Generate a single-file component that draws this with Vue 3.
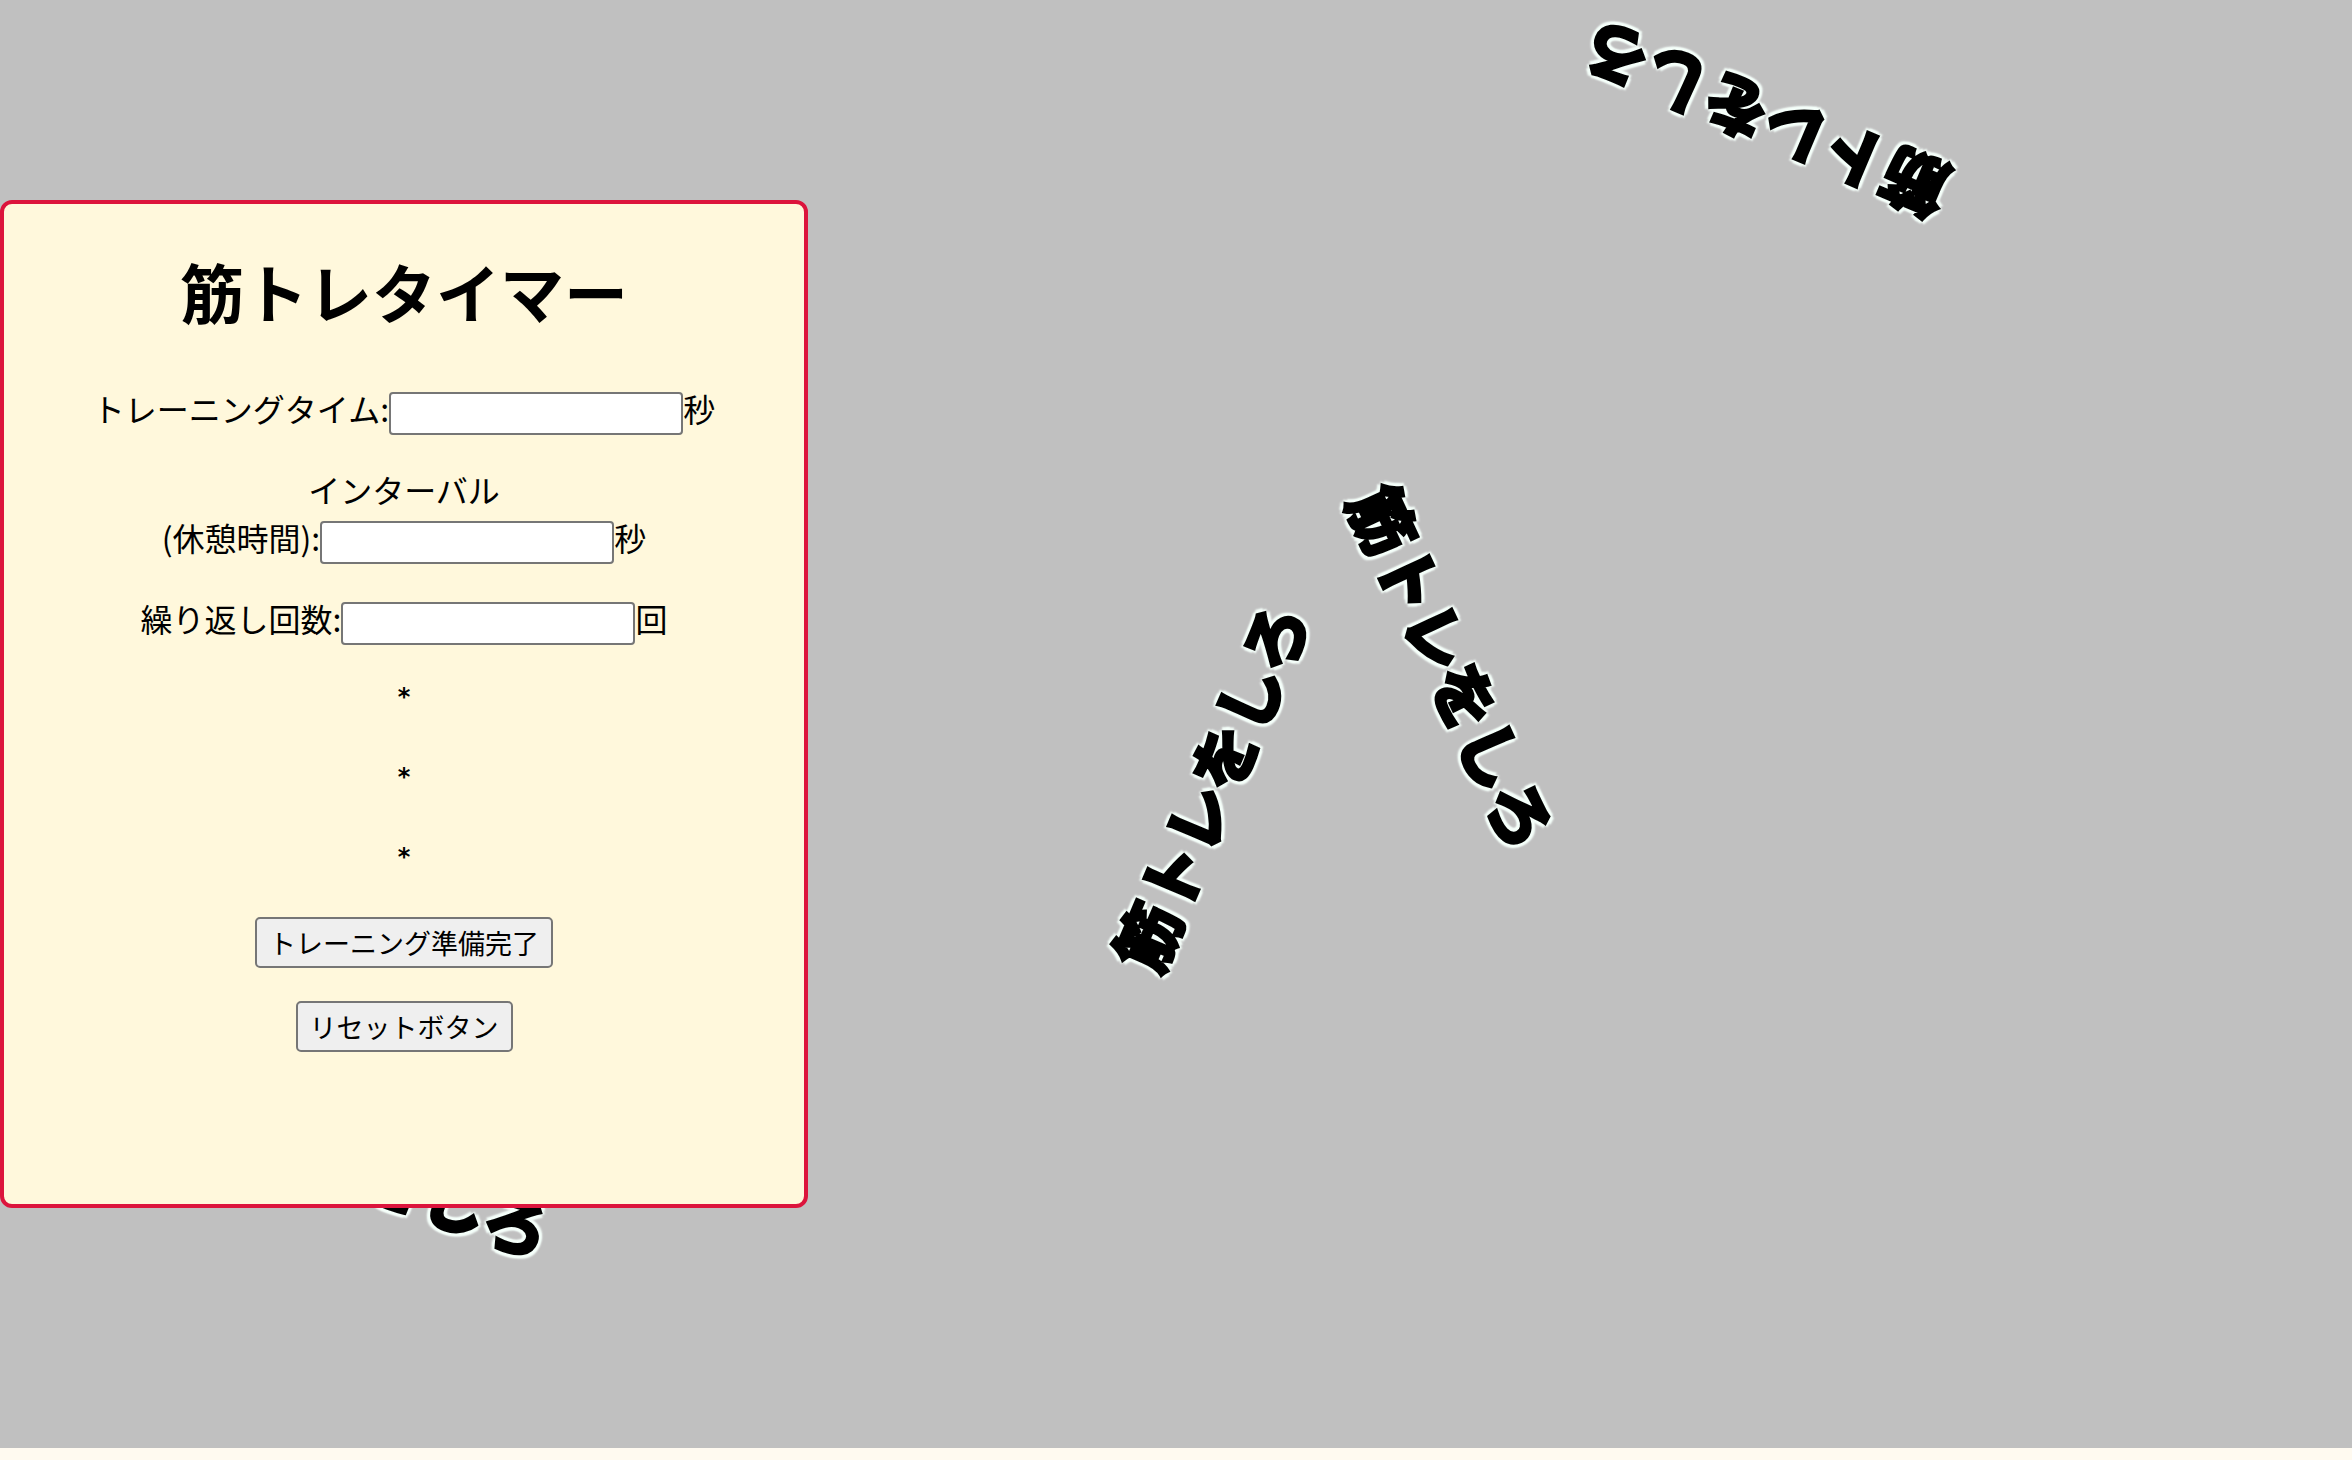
<script setup>
import { ref } from 'vue'

const trainingTime = ref('')
const intervalTime = ref('')
const repeatCount = ref('')
const marks = ref(['*', '*', '*'])

// Centre of each floating message, in percent of the stage, and its angle
const messages = [
  { x: 75, y: 8.4, angle: 203 },
  { x: 61.8, y: 46, angle: 65 },
  { x: 51.4, y: 54.3, angle: -67 },
  { x: 15.5, y: 80.5, angle: 20 },
]

function reset() {
  trainingTime.value = ''
  intervalTime.value = ''
  repeatCount.value = ''
}
</script>

<template>
  <div class="stage">
    <p
      v-for="(m, i) in messages"
      :key="i"
      class="message"
      :style="{ left: m.x + '%', top: m.y + '%', rotate: m.angle + 'deg' }"
    >筋トレをしろ</p>

    <main class="card">
      <h1>筋トレタイマー</h1>
      <form @submit.prevent>
        <p class="row">
          <label for="training">トレーニングタイム:</label><input id="training" v-model="trainingTime" type="text">秒
        </p>
        <p class="row">
          <label for="interval">インターバル<br>(休憩時間):</label><input id="interval" v-model="intervalTime" type="text">秒
        </p>
        <p class="row">
          <label for="repeat">繰り返し回数:</label><input id="repeat" v-model="repeatCount" type="text">回
        </p>
        <h5 v-for="(mark, i) in marks" :key="i">{{ mark }}</h5>
        <div class="actions">
          <button type="submit">トレーニング準備完了</button>
          <button type="button" @click="reset">リセットボタン</button>
        </div>
      </form>
    </main>
  </div>
</template>

<style>
body {
  background: #fffaf0;
}
</style>

<style scoped>
.stage {
  position: relative;
  display: flow-root;
  box-sizing: border-box;
  min-height: calc(100vh - 12px);
  padding-top: 200px;
  background: #c0c0c0;
  color: #000;
  font-family: "Noto Sans CJK JP", sans-serif;
}

.message {
  position: absolute;
  margin: 0;
  translate: -50% -50%;
  font-size: 65px;
  font-weight: 700;
  line-height: 64px;
  white-space: nowrap;
  -webkit-text-stroke: 4px #000;
  text-shadow:
    5px 0 2px #f5fffa, -5px 0 2px #f5fffa,
    0 5px 2px #f5fffa, 0 -5px 2px #f5fffa,
    4px 4px 2px #f5fffa, -4px 4px 2px #f5fffa,
    4px -4px 2px #f5fffa, -4px -4px 2px #f5fffa;
}

.card {
  position: relative;
  box-sizing: border-box;
  max-width: 808px;
  padding: 38px 16px 152px;
  border: 4px solid #dc143c;
  border-radius: 12px;
  background: #fff8dc;
  text-align: center;
}

h1 {
  margin: 0 0 46px;
  font-size: 64px;
  font-weight: 700;
  line-height: 96px;
}

.row {
  margin: 0 0 30px;
  font-size: 32px;
  line-height: 48px;
}

input {
  box-sizing: border-box;
  width: 294px;
  height: 43px;
  padding: 2px 4px;
  border: 2px solid #767676;
  border-radius: 4px;
  background: #fff;
  font: 27px "Liberation Sans", sans-serif;
}

h5 {
  margin: 0 0 36px;
  font-family: "DejaVu Sans", sans-serif;
  font-size: 24px;
  font-weight: 700;
  line-height: 44px;
}

.actions {
  display: flex;
  flex-direction: column;
  align-items: center;
  gap: 33px;
  padding-top: 2px;
}

button {
  box-sizing: border-box;
  height: 51px;
  padding: 0 12px;
  border: 2px solid #767676;
  border-radius: 5px;
  background: #efefef;
  color: #000;
  font-family: inherit;
  font-size: 27px;
  line-height: 44px;
}
</style>
